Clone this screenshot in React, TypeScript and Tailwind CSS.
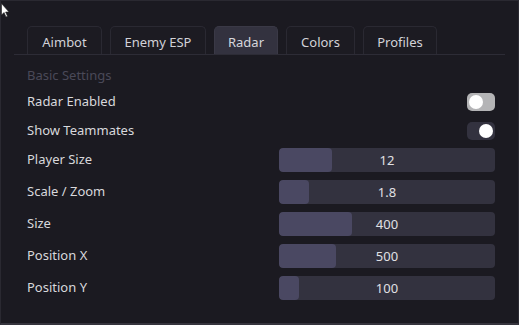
import React from "react";

const tabs = [
  { name: "Aimbot", w: 75 },
  { name: "Enemy ESP", w: 96 },
  { name: "Radar", w: 64, active: true },
  { name: "Colors", w: 69 },
  { name: "Profiles", w: 74 },
];

const sliders = [
  { label: "Player Size", value: "12", fill: 53 },
  { label: "Scale / Zoom", value: "1.8", fill: 30 },
  { label: "Size", value: "400", fill: 73 },
  { label: "Position X", value: "500", fill: 57 },
  { label: "Position Y", value: "100", fill: 20 },
];

export default function App() {
  return (
    <div
      className="relative w-[519px] h-[325px] bg-[#1b1a21] border border-[#2a2931] border-b-[2px] border-b-[#35343d] overflow-hidden"
      style={{ fontFamily: '"Noto Sans", "Open Sans", sans-serif' }}
    >
      <svg className="absolute left-0 top-[2px]" width="10" height="16" viewBox="0 0 10 16">
        <path d="M0.5 0.5 L0.5 12 L3 9.5 L5 14 L6.5 13.3 L4.6 9 L8 9 Z" fill="#fff" stroke="#222" strokeWidth="0.6" />
      </svg>
      <div className="mt-[25px] mx-[13px] flex gap-[8px] pl-[13px] border-b border-[#2d2c36]">
        {tabs.map((t) => (
          <div
            key={t.name}
            style={{ width: t.w }}
            className={
              "h-[28px] pt-[5px] flex items-center justify-center rounded-t-[5px] border border-b-0 text-[13px] " +
              (t.active
                ? "bg-[#33323f] border-[#3a3946] text-[#d6d6dc]"
                : "bg-[#1c1b22] border-[#2a2932] text-[#d2d2d8]")
            }
          >
            {t.name}
          </div>
        ))}
      </div>
      <div className="pl-[26px] pr-[23px] flex flex-col">
        <div className="h-[20px] mt-[11px] flex items-center text-[13px] text-[#4a4958]">Basic Settings</div>
        <div className="h-[29px] mt-[1px] flex items-center justify-between text-[13px] text-[#d8d8dc]">
          <span>Radar Enabled</span>
          <div className="w-[28px] h-[18px] rounded-[5px] bg-[#b4b4b6] flex items-center pl-[2px]">
            <div className="w-[14px] h-[14px] rounded-full bg-white" />
          </div>
        </div>
        <div className="h-[29px] flex items-center justify-between text-[13px] text-[#d8d8dc]">
          <span>Show Teammates</span>
          <div className="w-[28px] h-[18px] rounded-[5px] bg-[#33323f] flex items-center justify-end pr-[2px]">
            <div className="w-[14px] h-[14px] rounded-full bg-white" />
          </div>
        </div>
        <div className="flex flex-col gap-[8px] mt-[3px]">
          {sliders.map((s) => (
            <div key={s.label} className="h-[24px] flex items-center justify-between text-[13px] text-[#d8d8dc]">
              <span>{s.label}</span>
              <div className="relative w-[216px] h-[24px] rounded-[4px] bg-[#33323f] overflow-hidden">
                <div className="absolute left-0 top-0 h-full bg-[#4a4862] rounded-[4px]" style={{ width: s.fill }} />
                <div className="absolute inset-0 flex items-center justify-center pt-[1px] text-[13px] text-[#e0e0e4]">{s.value}</div>
              </div>
            </div>
          ))}
        </div>
      </div>
    </div>
  );
}
